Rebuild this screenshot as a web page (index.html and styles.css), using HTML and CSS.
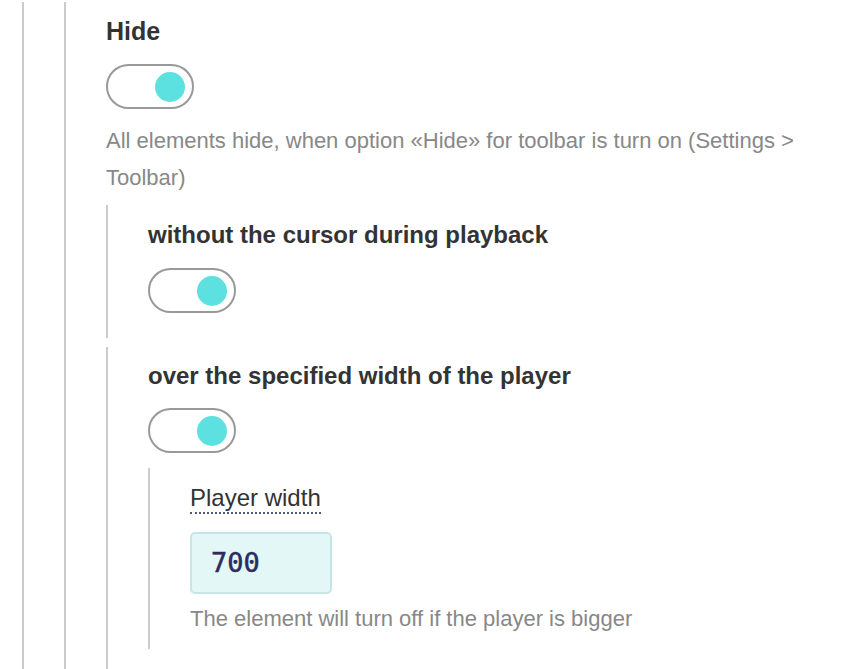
FILE: index.html
```html
<!DOCTYPE html>
<html>
<head>
<meta charset="utf-8">
<link rel="stylesheet" href="styles.css">
</head>
<body>
<div class="level level-1">
  <div class="level level-2">
    <h3 class="title title-main">Hide</h3>
    <div class="toggle"><span class="knob"></span></div>
    <p class="desc">All elements hide, when option «Hide» for toolbar is turn on (Settings &gt; Toolbar)</p>

    <div class="level sub sub-a">
      <h4 class="title">without the cursor during playback</h4>
      <div class="toggle"><span class="knob"></span></div>
    </div>

    <div class="level sub sub-b">
      <h4 class="title">over the specified width of the player</h4>
      <div class="toggle"><span class="knob"></span></div>

      <div class="level field">
        <label class="field-label">Player width</label>
        <div class="input">700</div>
        <p class="help">The element will turn off if the player is bigger</p>
      </div>
    </div>
  </div>
</div>
</body>
</html>
```

FILE: styles.css
```css
html, body {
  margin: 0;
  padding: 0;
  background: #fff;
  overflow: hidden;
  height: 669px;
}
body {
  font-family: "Liberation Sans", Arial, sans-serif;
  color: #333;
  padding-left: 22px;
}
.level {
  border-left: 2px solid #cccccc;
  padding-left: 40px;
}
.level-1 {
  height: 700px;
}
.level-2 {
  margin-top: 2px;
  padding-top: 15px;
  height: 700px;
}
.title {
  margin: 0;
  font-size: 24px;
  line-height: 28px;
  font-weight: bold;
  color: #333;
}
.title-main {
  font-size: 25px;
}
.toggle {
  box-sizing: border-box;
  width: 88px;
  height: 45px;
  border: 2px solid #999;
  border-radius: 23px;
  margin-top: 19px;
  display: flex;
  align-items: center;
  justify-content: flex-end;
  padding-right: 7px;
  background: #fff;
}
.knob {
  width: 30px;
  height: 30px;
  border-radius: 50%;
  background: #5ce1e0;
}
.desc {
  margin: 13px 0 0;
  font-size: 22px;
  line-height: 37px;
  color: #888;
  max-width: 700px;
}
.sub-a {
  margin-top: 9px;
  padding-top: 16px;
  padding-bottom: 25px;
}
.sub-b {
  margin-top: 9px;
  padding-top: 15px;
  padding-bottom: 20px;
}
.sub-b > .toggle {
  margin-top: 18px;
}
.field {
  margin-top: 15px;
  padding-top: 16px;
  padding-bottom: 17px;
}
.field-label {
  display: inline-block;
  font-size: 24px;
  line-height: 28px;
  color: #333;
  border-bottom: 2px dotted #4d5878;
}
.input {
  box-sizing: border-box;
  margin-top: 18px;
  width: 142px;
  height: 62px;
  background: #e4f7f7;
  border: 2px solid #c6e5e6;
  border-radius: 5px;
  padding-left: 19px;
  font-family: "DejaVu Sans Mono", monospace;
  font-size: 27px;
  line-height: 58px;
  color: #2e2a5e;
  -webkit-text-stroke: 0.5px #2e2a5e;
}
.help {
  margin: 12px 0 0;
  font-size: 22px;
  line-height: 26px;
  color: #888;
}
```
